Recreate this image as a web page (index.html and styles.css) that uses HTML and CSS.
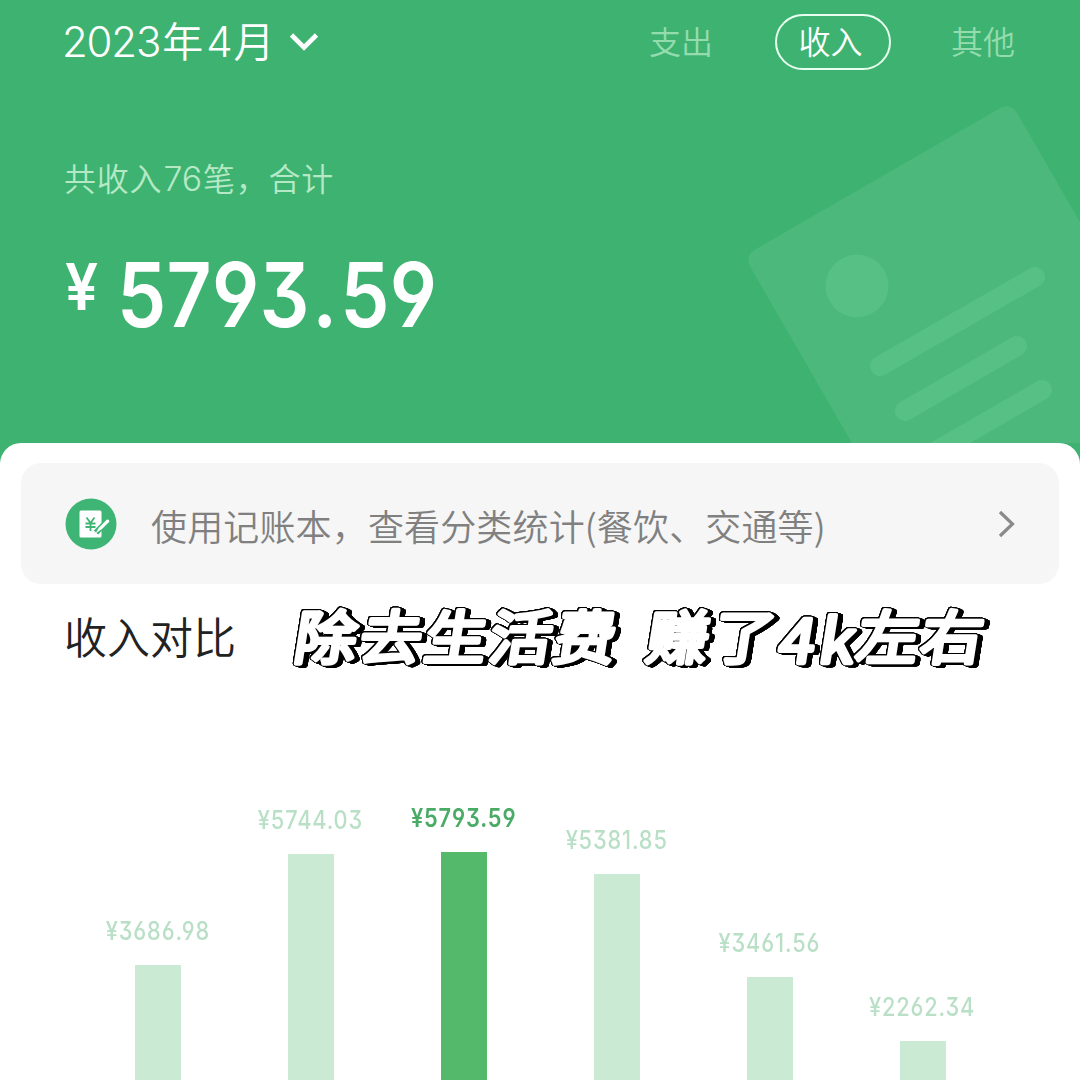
FILE: index.html
```html
<!DOCTYPE html>
<html lang="zh-CN">
<head>
<meta charset="utf-8">
<title>账单统计</title>
<link rel="stylesheet" href="styles.css">
</head>
<body>
<main class="screen">
  <header class="summary">
    <svg class="watermark" viewBox="0 0 340 360" aria-hidden="true">
      <rect class="sheet" width="308" height="420" rx="12" transform="translate(4 173) rotate(-30)"/>
      <circle class="mark" cx="117" cy="203" r="31.5"/>
      <path class="line" d="M140 283L295 194M165 328L277 263M165 386L302 307"/>
    </svg>
    <div class="topbar">
      <div class="month"><span class="num">2023</span><span class="han year">年</span><span class="num">4</span><span class="han moon">月</span>
        <svg class="chevron" viewBox="0 0 30 20"><path d="M2.5 3L15 15.5L27.500 3"/></svg>
      </div>
      <nav class="tabs">
        <span class="tab">支出</span>
        <span class="tab active">收入</span>
        <span class="tab">其他</span>
      </nav>
    </div>
    <p class="count">共收入<span class="num">76</span>笔，合计</p>
    <p class="total"><span class="yen">¥</span><span class="amount">5793<span class="point">.</span>59</span></p>
  </header>
  <section class="card">
    <a class="notice">
      <svg class="book" viewBox="0 0 52 52">
        <circle cx="26" cy="26" r="25.500" fill="#3eb574"/>
        <path d="M16 12.500h19q1.500 0 1.500 1.500v24q0 1.500-1.500 1.500H16q-1.500 0-1.500-1.500V14q0-1.500 1.500-1.500Z" fill="#fff"/>
        <path d="M31 34.500L43.500 22" stroke="#3eb574" stroke-width="6" fill="none"/>
        <path d="M30.500 35.500L34 29.500L42 21.500Q44 21 44.500 23.500L37 31Z" fill="#fff"/>
        <path d="M21.500 19.500L25.500 25L29.500 19.500M20.500 25.500H30.500M20.500 29H30.500M25.500 25V33" fill="none" stroke="#3eb574" stroke-width="1.800"/>
      </svg>
      <span class="notice-text">使用记账本，查看分类统计(餐饮、交通等)</span>
      <svg class="arrow" viewBox="0 0 18 30"><path d="M2 3L14.500 15L2 27"/></svg>
    </a>
    <div class="heading">
      <h2>收入对比</h2>
      <svg class="sticker" viewBox="0 0 730 106">
        <text transform="translate(12 75) skewX(-9) scale(1 .94)"><tspan x="0 65 130 195 259">除去生活费</tspan> <tspan x="352 418">赚了</tspan><tspan class="latin" x="485 525" y="4">4k</tspan><tspan x="562 626" y="0">左右</tspan></text>
      </svg>
    </div>
    <div class="chart">
      <div class="col"><span class="value">¥3686.98</span><i class="bar" style="height:115.500px"></i></div>
      <div class="col"><span class="value">¥5744.03</span><i class="bar" style="height:226px"></i></div>
      <div class="col current"><span class="value">¥5793.59</span><i class="bar" style="height:228.500px"></i></div>
      <div class="col"><span class="value">¥5381.85</span><i class="bar" style="height:206px"></i></div>
      <div class="col"><span class="value">¥3461.56</span><i class="bar" style="height:103.500px"></i></div>
      <div class="col"><span class="value">¥2262.34</span><i class="bar" style="height:39px"></i></div>
    </div>
  </section>
</main>
</body>
</html>
```
FILE: styles.css
```css
* { box-sizing: border-box; }
body, p, h2 { margin: 0; }
body { font-family: "Noto Sans CJK SC", sans-serif; font-weight: 350; }
.screen {
  width: 1080px; height: 1080px; overflow: hidden;
  display: flex; flex-direction: column; background: #3eb371;
}
.summary { position: relative; height: 443px; flex: none; padding: 0 65px 0 64px; color: #fff; overflow: hidden; }
.watermark { position: absolute; left: 740px; top: 83px; width: 340px; height: 360px; }
.sheet { fill: #4cb87b; }
.mark { fill: #57c084; }
.line { fill: none; stroke: #57c084; stroke-width: 20; stroke-linecap: round; }
.num { font-family: Inter, sans-serif; }

.topbar { display: flex; justify-content: space-between; align-items: center; height: 83px; position: relative; }
.month { display: flex; align-items: center; font-size: 41px; line-height: 60px; margin-left: -2px; }
.month .num { font-size: 42px; font-weight: 300; letter-spacing: -1.2px; }
.han { padding-bottom: 6px; }
.year { margin: 0 3px 0 2px; }
.moon { margin: 0 2px; }
.chevron { width: 30px; height: 20px; margin-left: 13px; }
.chevron path { fill: none; stroke: #fff; stroke-width: 4.6; }
.tabs { display: flex; align-items: center; gap: 60px; }
.tab { font-size: 32px; line-height: 44px; padding-bottom: 4px; color: #94dcae; }
.tab.active { width: 116px; height: 56px; line-height: 48px; margin-left: 2px; padding-right: 5px; text-align: center; color: #fff; border: 2.5px solid #e8fff0; border-radius: 28px; }
.count { margin-top: 70px; font-size: 32px; line-height: 48px; color: #b5e9c6; letter-spacing: .8px; white-space: nowrap; }
.count .num { font-size: 34px; font-weight: 300; letter-spacing: -.2px; margin: 0 1px; }
.total { display: flex; margin-top: 39px; height: 106px; font-family: Inter, sans-serif; font-feature-settings: "cv09", "cv03", "cv04"; font-weight: 600; }
.yen { font-size: 64px; line-height: 90px; width: 54px; margin-left: 1px; margin-right: -2px; transform: scaleX(.92); transform-origin: 0 50%; }
.amount { font-size: 89px; line-height: 106px; letter-spacing: .3px; font-weight: 600; transform: scaleX(.88); transform-origin: 0 50%; }
.point { margin: 0 3px; }

.card { flex: 1; min-height: 0; display: flex; flex-direction: column; padding: 20px 21px 0; background: #fff; border-radius: 21px 21px 0 0; }
.notice { display: flex; align-items: center; height: 121px; flex: none; padding: 0 43px 0 44px; border-radius: 20px; background: #f6f6f6; color: #808080; }
.book { width: 52px; height: 52px; }
.notice-text { flex: 1; margin-left: 34px; font-size: 36px; line-height: 54px; letter-spacing: .15px; white-space: nowrap; padding-top: 2px; }
.arrow { width: 18px; height: 30px; }
.arrow path { fill: none; stroke: #8a8a8a; stroke-width: 3.2; }
.heading { display: flex; align-items: center; height: 106px; flex: none; padding-left: 43px; }
h2 { font-size: 43px; line-height: 60px; padding-bottom: 4px; font-weight: 350; color: #222; }
.sticker {
  width: 730px; height: 106px; flex: none; margin-left: 44px;
  filter: drop-shadow(.7px 0 0 #000) drop-shadow(-.7px 0 0 #000) drop-shadow(0 .7px 0 #000) drop-shadow(0 -.7px 0 #000)
    drop-shadow(2px 1px 0 #000) drop-shadow(3px 1px 0 #000);
}
.sticker text { font-size: 62px; font-weight: 400; fill: #fff; stroke: #fff; stroke-width: 4.6px; stroke-linejoin: round; }
.sticker .latin { font-size: 64px; }
.chart { flex: 1; display: grid; grid-template-columns: repeat(6, 153px); padding-left: 60px; }
.col { display: flex; flex-direction: column; align-items: center; justify-content: flex-end; }
.value { font-family: Inter, sans-serif; font-feature-settings: "cv09", "cv03", "cv04"; font-size: 25px; line-height: 24px; letter-spacing: 1px; margin-bottom: 22px; font-weight: 500; color: #b9dfc6; transform: scaleX(.87); }
.bar { display: block; width: 46px; background: #cbead4; }
.current .value { color: #4aab66; font-weight: 600; }
.current .bar { background: #55b96c; }
```
